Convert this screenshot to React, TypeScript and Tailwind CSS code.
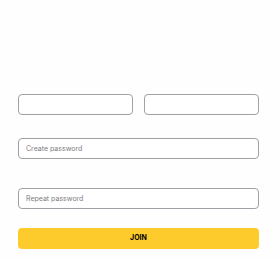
import { useState } from "react";

export default function App() {
  const [first, setFirst] = useState("");
  const [last, setLast] = useState("");
  const [pass, setPass] = useState("");
  const [repeat, setRepeat] = useState("");

  const input =
    "block w-full h-[21px] rounded-[4px] border border-[#a0a0a6] bg-white px-[7px] text-[7px] text-[#333] placeholder:text-[#7c7c82] outline-none";

  return (
    <div className="min-h-[260px] w-[280px] bg-[#fefefe] font-['Inter',sans-serif]">
      <form
        className="pl-[18px] pr-[21px] pt-[94px]"
        onSubmit={(e) => e.preventDefault()}
      >
        <div className="grid grid-cols-2 gap-[11px]">
          <input className={input} value={first} onChange={(e) => setFirst(e.target.value)} />
          <input className={input} value={last} onChange={(e) => setLast(e.target.value)} />
        </div>
        <input
          type="password"
          className={input + " mt-[23px]"}
          placeholder="Create password"
          value={pass}
          onChange={(e) => setPass(e.target.value)}
        />
        <input
          type="password"
          className={input + " mt-[29px]"}
          placeholder="Repeat password"
          value={repeat}
          onChange={(e) => setRepeat(e.target.value)}
        />
        <button
          type="submit"
          className="mt-[19px] flex h-[21px] w-full items-center justify-center rounded-[4px] bg-[#fdcb2c] text-[7px] font-bold text-black"
        >
          JOIN
        </button>
      </form>
    </div>
  );
}
